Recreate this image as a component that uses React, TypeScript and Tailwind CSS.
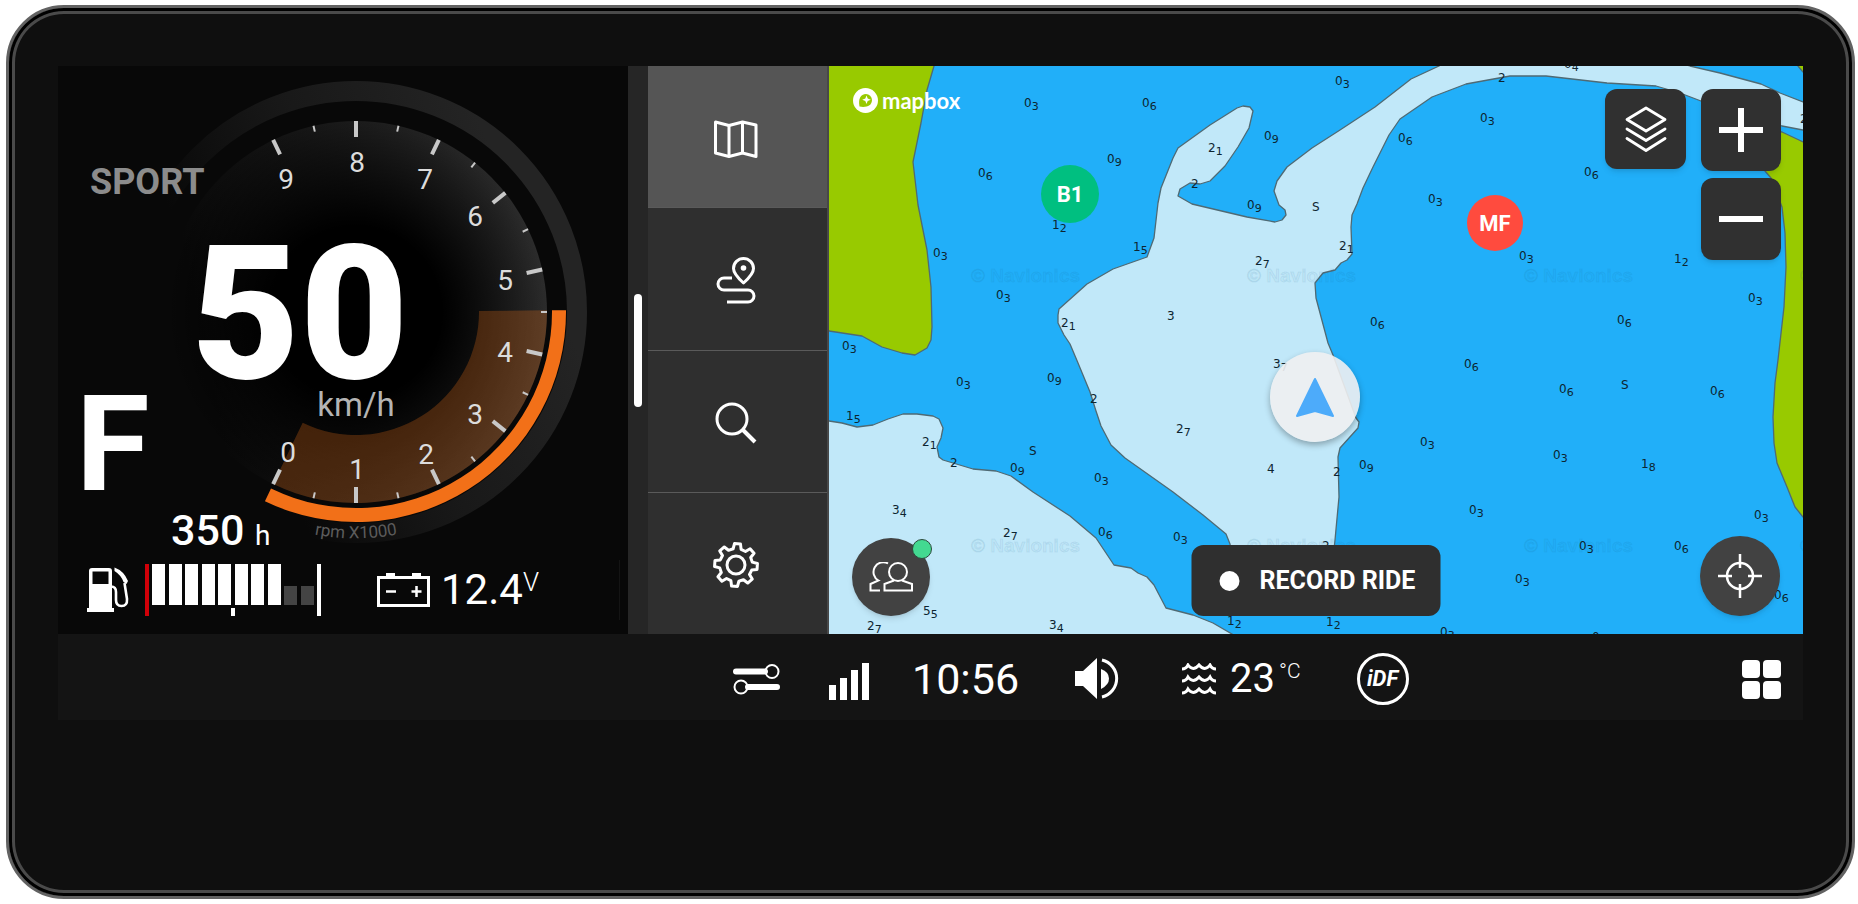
import type { ReactNode } from "react";

type Sounding = [number, number, string, string?];

const SOUNDINGS: Sounding[] = [
  [1024, 107, "0", "3"],
  [1142, 107, "0", "6"],
  [1264, 140, "0", "9"],
  [1208, 152, "2", "1"],
  [1191, 188, "2"],
  [1107, 163, "0", "9"],
  [978, 177, "0", "6"],
  [1247, 209, "0", "9"],
  [1312, 211, "S"],
  [1052, 229, "1", "2"],
  [1133, 251, "1", "5"],
  [933, 257, "0", "3"],
  [1255, 265, "2", "7"],
  [996, 299, "0", "3"],
  [1061, 327, "2", "1"],
  [1167, 320, "3"],
  [842, 350, "0", "3"],
  [1335, 85, "0", "3"],
  [1498, 82, "2"],
  [1564, 68, "0", "4"],
  [1480, 122, "0", "3"],
  [1398, 142, "0", "6"],
  [1584, 176, "0", "6"],
  [1428, 203, "0", "3"],
  [1339, 250, "2", "1"],
  [1519, 260, "0", "3"],
  [1674, 263, "1", "2"],
  [1748, 302, "0", "3"],
  [1370, 326, "0", "6"],
  [1617, 324, "0", "6"],
  [1800, 123, "2"],
  [956, 386, "0", "3"],
  [1047, 382, "0", "9"],
  [1090, 403, "2"],
  [846, 420, "1", "5"],
  [1273, 368, "3", "7"],
  [1176, 433, "2", "7"],
  [922, 446, "2", "1"],
  [1029, 455, "S"],
  [950, 467, "2"],
  [1010, 472, "0", "9"],
  [1094, 482, "0", "3"],
  [1267, 473, "4"],
  [892, 514, "3", "4"],
  [1003, 537, "2", "7"],
  [1098, 536, "0", "6"],
  [1173, 541, "0", "3"],
  [923, 615, "5", "5"],
  [867, 630, "2", "7"],
  [1049, 629, "3", "4"],
  [1227, 625, "1", "2"],
  [1326, 626, "1", "2"],
  [1464, 368, "0", "6"],
  [1559, 393, "0", "6"],
  [1621, 389, "S"],
  [1710, 395, "0", "6"],
  [1420, 446, "0", "3"],
  [1553, 459, "0", "3"],
  [1641, 468, "1", "8"],
  [1359, 469, "0", "9"],
  [1333, 476, "2"],
  [1469, 514, "0", "3"],
  [1754, 519, "0", "3"],
  [1579, 550, "0", "3"],
  [1674, 550, "0", "6"],
  [1515, 583, "0", "3"],
  [1774, 599, "0", "6"],
  [1440, 636, "0", "3"],
  [1592, 641, "0"],
  [1322, 550, "2"],
];

const LAND_WEST =
  "829,60 936,60 934,66 927,90 921,123 913,162 918,205 927,250 931,287 932,327 931,340 927,348 915,355 902,353 882,347 862,336 829,331 820,330 820,60";
const LAND_EAST =
  "1810,145 1803,142 1799,140 1782,132 1768,130 1755,150 1765,171 1771,178 1782,207 1785,233 1786,267 1784,307 1778,360 1775,383 1773,417 1774,443 1777,463 1787,487 1795,507 1803,517 1812,525";
const SHALLOW_WEST =
  "820,420 829,421 842,423 857,427 873,425 888,419 903,414 917,414 933,416 939,419 943,428 941,438 937,447 939,457 943,460 953,463 973,469 996,471 1011,476 1033,492 1070,516 1096,538 1114,565 1131,568 1138,573 1147,577 1154,585 1166,608 1193,615 1213,623 1232,634 1240,640 820,640";
const SHALLOW_MID =
  "1237,108 1243,106 1250,107 1253,111 1249,128 1238,147 1225,166 1210,181 1200,184 1190,183 1180,189 1178,196 1192,204 1247,217 1275,222 1282,220 1286,215 1285,210 1279,205 1274,191 1277,181 1287,167 1312,148 1340,130 1375,107 1411,79 1439,66 1450,60 1670,60 1690,66 1720,73 1761,84 1780,93 1803,102 1812,105 1812,132 1803,130 1782,126 1701,101 1680,93 1656,86 1607,83 1546,76 1510,76 1466,84 1432,97 1400,119 1389,135 1373,167 1363,188 1357,204 1352,215 1351,227 1352,254 1347,260 1341,263 1335,270 1323,273 1315,283 1316,298 1328,343 1333,355 1356,418 1359,422 1358,428 1340,448 1338,457 1339,497 1335,540 1332,570 1234,570 1230,544 1226,534 1203,515 1173,492 1125,458 1111,445 1101,426 1096,411 1090,392 1078,363 1070,344 1064,335 1058,323 1058,315 1059,309 1087,284 1113,269 1147,257 1154,238 1158,203 1161,188 1173,158 1178,148 1210,125";

const Chart = () => (
  <svg
    className="absolute inset-0 size-full"
    viewBox="829 66 974 568"
    preserveAspectRatio="xMidYMid slice"
    aria-label="Nautical chart"
  >
    <rect x="800" y="40" width="1030" height="620" fill="#21aff9" />
    <g stroke="#4f6a74" strokeWidth="1.3" strokeLinejoin="round">
      <polygon points={SHALLOW_WEST} fill="#c1e8f9" />
      <polygon points={SHALLOW_MID} fill="#c1e8f9" />
      <polygon points={LAND_WEST} fill="#98ca00" />
      <polygon points={LAND_EAST} fill="#98ca00" />
      <polygon points="1797,60 1798,66 1803,72 1810,78 1810,60" fill="#98ca00" />
    </g>
    <g
      className="font-['Liberation_Sans'] font-bold"
      fontSize="19"
      fill="#1a5f86"
      fillOpacity="0.05"
      stroke="#1a5f86"
      strokeOpacity="0.09"
    >
      {[282, 552].map((y) =>
        [971, 1247, 1524, 1800].map((x) => (
          <text key={`${x}-${y}`} x={x} y={y}>
            © Navionics
          </text>
        ))
      )}
    </g>
    <g className="font-['DejaVu_Sans']" fontSize="12" fill="#0d2530">
      {SOUNDINGS.map(([x, y, whole, tenths]) => (
        <text key={`${x}-${y}`} x={x} y={y}>
          {whole}
          {tenths && (
            <tspan dy="3" fontSize="11">
              {tenths}
            </tspan>
          )}
        </text>
      ))}
    </g>
  </svg>
);

/* Tachometer dial, one unit every 360/14 degrees, 1 at the bottom */
const CX = 298;
const CY = 246;
const STEP = 360 / 14;

const point = (radius: number, degrees: number) => {
  const rad = (degrees * Math.PI) / 180;
  return { x: CX + radius * Math.cos(rad), y: CY + radius * Math.sin(rad) };
};

const band = (inner: number, outer: number, from: number, to: number) => {
  const a = point(outer, from);
  const b = point(outer, to);
  const c = point(inner, to);
  const d = point(inner, from);
  return `M${a.x} ${a.y}A${outer} ${outer} 0 0 1 ${b.x} ${b.y}L${c.x} ${c.y}A${inner} ${inner} 0 0 0 ${d.x} ${d.y}Z`;
};

const DIAL_LABELS = [
  [230, 396],
  [299, 413],
  [368, 398],
  [417, 358],
  [447, 296],
  [447, 224],
  [417, 160],
  [367, 123],
  [299, 106],
  [228, 123],
];

const Tachometer = () => (
  <svg
    className="absolute inset-0 font-['Roboto']"
    width="569"
    height="568"
    viewBox="0 0 569 568"
    aria-label="Tachometer"
  >
    <defs>
      <linearGradient id="rim" x1="0.2" x2="0.9" y1="0.65" y2="0.35">
        <stop offset="0.05" stopColor="#242424" stopOpacity="0" />
        <stop offset="0.5" stopColor="#202020" stopOpacity="0.7" />
        <stop offset="1" stopColor="#242424" />
      </linearGradient>
      <linearGradient id="face" x1="0" x2="1" y1="0.6" y2="0.4">
        <stop offset="0.1" stopColor="#080808" />
        <stop offset="0.5" stopColor="#171717" />
        <stop offset="1" stopColor="#2c2c2c" />
      </linearGradient>
      <radialGradient id="core">
        <stop offset="0.45" stopColor="#000" />
        <stop offset="1" stopColor="#000" stopOpacity="0" />
      </radialGradient>
      <path id="rpm" d="M178 438A227 227 0 0 0 418 438" />
    </defs>
    <circle cx={CX} cy={CY} r="221" fill="none" stroke="url(#rim)" strokeWidth="20" />
    <circle cx={CX} cy={CY} r="191" fill="url(#face)" />
    <circle cx={CX} cy={CY} r="191" fill="url(#core)" />
    <path d={band(123, 191, -0.5, 115.7)} fill="#f47216" fillOpacity="0.26" />
    <path d={band(196, 210, -0.5, 115.7)} fill="#f27018" />

    {Array.from({ length: 19 }, (_, i) => {
      const angle = 90 + STEP - (i * STEP) / 2;
      const major = i % 2 === 0;
      const a = point(major ? 175 : 185, angle);
      const b = point(191, angle);
      return (
        <line
          key={i}
          x1={a.x}
          y1={a.y}
          x2={b.x}
          y2={b.y}
          stroke="#c8c8c8"
          strokeWidth={major ? 4 : 2}
        />
      );
    })}
    <g fontSize="28" fill="#dcdcdc" textAnchor="middle">
      {DIAL_LABELS.map(([x, y], n) => (
        <text key={n} x={x} y={y}>
          {n}
        </text>
      ))}
    </g>

    <text x="242" y="312" fontSize="187" fontWeight="900" fill="#fff" textAnchor="middle">
      50
    </text>
    <text x="298" y="350" fontSize="33" fill="#b4b4b4" textAnchor="middle">
      km/h
    </text>
    <text fontSize="17" fill="#5c5c5c" textAnchor="middle">
      <textPath href="#rpm" startOffset="50%">
        rpm X1000
      </textPath>
    </text>
  </svg>
);

const FuelIcon = () => (
  <svg className="h-[46px] w-[42px]" viewBox="0 0 42 46" fill="none" aria-label="Fuel">
    <path
      fillRule="evenodd"
      d="M2 4Q2 1 5 1H22Q25 1 25 4V41H27V45H0V41H2ZM5.500 4.500V17H21.500V4.500Z"
      fill="#fff"
    />
    <path d="M24 19.500Q29 19.500 29 25V33Q29 39 34.500 39Q40.500 39 40 32L37.500 16" stroke="#fff" strokeWidth="2.600" />
    <path d="M27.500 0.500Q37 4 41 14L39.500 17L36.500 15Q34 8 27.500 4Z" fill="#fff" />
  </svg>
);

const FuelGauge = () => (
  <div className="relative flex h-[52px] w-[176px] items-start justify-between" role="img" aria-label="Fuel 8 of 10">
    <div className="h-full w-1 bg-[#d00008]" />
    {Array.from({ length: 10 }, (_, i) => (
      <div
        key={i}
        className={i < 8 ? "h-[41px] w-[13px] bg-white" : "mt-[22px] h-[19px] w-[13px] bg-[#444]"}
      />
    ))}
    <div className="h-full w-1 bg-white" />
    <div className="absolute bottom-0 left-1/2 h-2 w-1 -translate-x-1/2 bg-white" />
  </div>
);

const BatteryIcon = () => (
  <svg className="h-[34px] w-[53px]" viewBox="0 0 53 34" fill="none" stroke="#fff" aria-label="Battery">
    <path d="M1.500 4.500H51.500V32.500H1.500Z" strokeWidth="3" />
    <path d="M9 2H18M35 2H44" strokeWidth="4" />
    <path d="M9 18.500H19M34.500 18.500H44.500M39.500 13V24" strokeWidth="2.500" />
  </svg>
);

const Dashboard = () => (
  <section className="relative flex w-[570px] shrink-0 flex-col bg-[#080808] text-white">
    <Tachometer />
    <div className="relative flex flex-1 flex-col">
      <p className="mt-[98px] pl-8 text-[36px] leading-none font-bold text-[#8c8c8c]">SPORT</p>
      <p className="mt-auto pl-[18px] text-[134px] leading-[128px] font-bold">F</p>
      <p className="pl-[113px] text-[43px] leading-none font-medium">
        350 <span className="text-[28px] font-normal">h</span>
      </p>
      <div className="mt-2 mb-[14px] flex h-[60px] items-center pl-[29px]">
        <FuelIcon />
        <div className="ml-4">
          <FuelGauge />
        </div>
        <div className="ml-14 flex items-center gap-[11px]">
          <BatteryIcon />
          <p className="flex items-start text-[42px] leading-none">
            12.4<span className="text-[26px] leading-none font-light">V</span>
          </p>
        </div>
        <div className="mr-2 ml-auto h-full w-px bg-[#141414]" />
      </div>
    </div>
  </section>
);

const MapIcon = () => (
  <svg className="h-[38px] w-[44px]" viewBox="0 0 44 38" fill="none" stroke="#fff" strokeWidth="3" strokeLinejoin="round">
    <path d="M1.500 2L15 5.500L28.500 2L42 5V36.500L28.500 33L15 36.500L1.500 33Z" />
    <path d="M15 5.500V36.500M28.500 2V33" />
  </svg>
);

const RouteIcon = () => (
  <svg className="h-[47px] w-[40px]" viewBox="0 0 40 47" fill="none" stroke="#fff" strokeWidth="3">
    <path d="M27.500 26Q17.500 17 17.500 11.500A10 10 0 0 1 37.500 11.500Q37.500 17 27.500 26Z" strokeLinejoin="round" />
    <circle cx="27.500" cy="11" r="2.800" fill="#fff" stroke="none" />
    <path d="M16 21H8A6 6 0 0 0 8 33H32A6 6 0 0 1 32 45H11" />
  </svg>
);

const SearchIcon = () => (
  <svg className="h-[42px] w-[42px]" viewBox="0 0 42 42" fill="none" stroke="#fff" strokeWidth="3">
    <circle cx="17" cy="17" r="15" />
    <path d="M28 28L40 40" strokeWidth="4" />
  </svg>
);

/* Eight-tooth cog outline */
const gearPath = () => {
  const parts: string[] = [];
  const radii = [21.5, 21.5, 16.5, 16.5];
  const offsets = [-8, 8, 14, 31];
  for (let tooth = 0; tooth < 8; tooth++) {
    offsets.forEach((offset, i) => {
      const rad = ((tooth * 45 + offset - 86) * Math.PI) / 180;
      parts.push(`${23 + radii[i] * Math.cos(rad)} ${23 + radii[i] * Math.sin(rad)}`);
    });
  }
  return `M${parts.join("L")}Z`;
};

const GearIcon = () => (
  <svg className="h-[46px] w-[46px]" viewBox="0 0 46 46" fill="none" stroke="#fff" strokeWidth="3" strokeLinejoin="round">
    <path d={gearPath()} />
    <circle cx="23" cy="23" r="9" />
  </svg>
);

interface NavButtonProps {
  label: string;
  active?: boolean;
  children: ReactNode;
}

const NavButton = ({ label, active, children }: NavButtonProps) => (
  <button
    aria-label={label}
    className={`flex flex-1 items-center justify-center border-b border-[#5a5a5a] pt-1 pr-1 last:border-b-0 ${
      active ? "bg-[#555]" : "bg-[#2f2f2f]"
    }`}
  >
    {children}
  </button>
);

const MapPanel = () => (
  <section className="relative min-w-0 flex-1 overflow-hidden">
    <Chart />

    <div className="absolute top-[22px] left-6 flex items-center gap-1 text-white">
      <svg className="size-[25px]" viewBox="0 0 25 25" aria-hidden="true">
        <circle cx="12.500" cy="12.500" r="12.500" fill="#fff" />
        <path d="M6.500 18.500C5 11 7.500 6 13 6A6.300 6.300 0 0 1 19 12C19 17.500 13 20 6.500 18.500Z" fill="#98ca00" />
        <path d="M13.500 7.500L14.700 10.600L17.800 11.800L14.700 13L13.500 16L12.300 13L9.200 11.800L12.300 10.600Z" fill="#fff" />
      </svg>
      <span className="font-['Lato'] text-[22px] leading-6 font-bold">mapbox</span>
    </div>

    <button className="absolute top-[99px] left-[212px] flex size-[58px] items-center justify-center rounded-full bg-[#00bf80] text-[22px] font-bold text-white">
      B1
    </button>
    <button className="absolute top-[129px] left-[638px] flex size-[56px] items-center justify-center rounded-full bg-[#ff4b3e] text-[22px] font-bold text-white">
      MF
    </button>

    <div className="absolute top-[286px] left-[441px] flex size-[90px] items-center justify-center rounded-full bg-[#eff0f1]/90 shadow-[0_3px_6px_rgba(0,0,0,0.3)]">
      <svg className="h-[41px] w-[40px]" viewBox="0 0 40 41" aria-label="Current position">
        <path d="M20 2L38 39L20 34L2 39Z" fill="#4dabfa" stroke="#4dabfa" strokeWidth="2" strokeLinejoin="round" />
      </svg>
    </div>

    <div className="absolute top-[23px] right-[22px] flex items-start gap-[15px]">
      <button aria-label="Layers" className="flex h-20 w-[81px] items-center justify-center rounded-xl bg-[#303030] shadow-md">
        <svg className="h-[46px] w-[42px]" viewBox="0 0 42 46" fill="none" stroke="#fff" strokeWidth="2.800" strokeLinejoin="round" strokeLinecap="round">
          <path d="M21 2L40 13.500L21 25L2 13.500Z" />
          <path d="M2 23L21 34.500L40 23M2 32.500L21 44.500L40 32.500" />
        </svg>
      </button>
      <div className="flex flex-col gap-[7px]">
        <button aria-label="Zoom in" className="flex h-[82px] w-20 items-center justify-center rounded-xl bg-[#303030] shadow-md">
          <svg className="size-[44px]" viewBox="0 0 44 44" stroke="#fff" strokeWidth="6">
            <path d="M0 22H44M22 0V44" />
          </svg>
        </button>
        <button aria-label="Zoom out" className="flex h-[82px] w-20 items-center justify-center rounded-xl bg-[#303030] shadow-md">
          <svg className="size-[44px]" viewBox="0 0 44 44" stroke="#fff" strokeWidth="6">
            <path d="M0 22H44" />
          </svg>
        </button>
      </div>
    </div>

    <div className="absolute inset-x-[23px] bottom-[18px] flex items-end justify-between">
      <button aria-label="Group" className="relative flex size-[78px] items-center justify-center rounded-full bg-[#424242] shadow-md">
        <svg className="h-[30px] w-[44px]" viewBox="0 0 44 30" fill="none" stroke="#fff" strokeWidth="2">
          <circle cx="29" cy="10" r="9" />
          <path d="M25 18.500L15.500 22V28.500H43V22L33 18.500" />
          <path d="M19 1.500A9 9 0 0 0 9.500 18.500L1.500 22V28.500H11" />
        </svg>
        <span className="absolute top-[1px] -right-[2px] size-5 rounded-full border border-[#2d4a3c] bg-[#43d991]" />
      </button>
      <button aria-label="Center on position" className="flex size-20 items-center justify-center rounded-full bg-[#424242] shadow-md">
        <svg className="size-[44px]" viewBox="0 0 44 44" fill="none" stroke="#fff" strokeWidth="2.500">
          <circle cx="22" cy="22" r="13" />
          <path d="M22 0V14M22 30V44M0 22H14M30 22H44" />
        </svg>
      </button>
    </div>
    <button className="absolute bottom-[18px] left-1/2 flex h-[71px] w-[249px] -translate-x-1/2 items-center gap-5 rounded-xl bg-[#2f2f2f] pl-7 text-[25px] font-bold text-white">
      <span className="size-5 shrink-0 rounded-full bg-white" />
      <span className="whitespace-nowrap">RECORD RIDE</span>
    </button>
  </section>
);

const StatusBar = () => (
  <footer className="flex h-[86px] items-center bg-[#141414] pt-1 pr-[22px] pl-[675px] text-white">
    <button aria-label="Quick settings">
      <svg className="h-[31px] w-[47px]" viewBox="0 0 47 31" fill="none" stroke="#fff">
        <path d="M3 7.500H32M15 23H44" strokeWidth="6" strokeLinecap="round" />
        <circle cx="39" cy="7.500" r="6.500" strokeWidth="2" />
        <circle cx="8" cy="23" r="6.500" strokeWidth="2" />
      </svg>
    </button>
    <svg className="mt-1 ml-[49px] h-[37px] w-[41px]" viewBox="0 0 41 37" fill="#fff" aria-label="Signal">
      <path d="M0 22H7V37H0ZM11 15H18V37H11ZM22 7H29V37H22ZM33 0H40V37H33Z" />
    </svg>
    <time className="ml-[42px] w-[107px] text-[43px] leading-none whitespace-nowrap">10:56</time>
    <button aria-label="Volume" className="ml-[56px]">
      <svg className="h-[42px] w-[44px]" viewBox="0 0 44 42" fill="#fff">
        <path d="M0 13H8L22 0V41L8 28H0Z" />
        <path d="M26 11Q34 14 34 20.500Q34 27 26 31Z" />
        <path d="M27 2A19 19 0 0 1 27 39" fill="none" stroke="#fff" strokeWidth="3" />
      </svg>
    </button>
    <svg className="ml-[63px] h-[32px] w-[34px]" viewBox="0 0 34 32" fill="none" stroke="#fff" strokeWidth="3" aria-label="Water temperature">
      <path d="M0 6Q4 6 6 2Q11 9 17 2Q23 9 28 2Q30 6 34 6" />
      <path d="M0 18Q4 18 6 14Q11 21 17 14Q23 21 28 14Q30 18 34 18" />
      <path d="M0 30Q4 30 6 26Q11 33 17 26Q23 33 28 26Q30 30 34 30" />
    </svg>
    <p className="ml-[14px] flex items-start text-[40px] leading-none">
      23<span className="ml-1 text-[21px] leading-6 font-light">°C</span>
    </p>
    <div className="ml-14 flex size-[52px] items-center justify-center rounded-full border-[3px] border-white text-[22px] leading-none font-bold italic">
      iDF
    </div>
    <button aria-label="Apps" className="ml-auto grid grid-cols-2 gap-[3px]">
      <span className="size-[18px] rounded bg-white" />
      <span className="size-[18px] rounded bg-white" />
      <span className="size-[18px] rounded bg-white" />
      <span className="size-[18px] rounded bg-white" />
    </button>
  </footer>
);

const App = () => {
  return (
    <main className="min-h-screen bg-white pt-[5px] pr-[3px] pb-[5px] pl-[6px] font-['Roboto',sans-serif]">
      <div className="rounded-[58px] border-[3px] border-[#626262] bg-[#0f0f0f] px-[49px] pt-[58px] pb-[176px] shadow-[inset_0_0_0_3px_#000,inset_0_0_0_6px_#4a4a4a]">
        <div className="flex h-[568px]">
          <Dashboard />
          <div className="flex w-5 shrink-0 items-center justify-center bg-[#262626]">
            <div className="h-[113px] w-2 rounded-full bg-white" />
          </div>
          <nav className="flex w-[181px] shrink-0 flex-col border-r-2 border-[#484848]">
            <NavButton label="Map" active>
              <MapIcon />
            </NavButton>
            <NavButton label="Routes">
              <RouteIcon />
            </NavButton>
            <NavButton label="Search">
              <SearchIcon />
            </NavButton>
            <NavButton label="Settings">
              <GearIcon />
            </NavButton>
          </nav>
          <MapPanel />
        </div>
        <StatusBar />
      </div>
    </main>
  );
};

export default App;
